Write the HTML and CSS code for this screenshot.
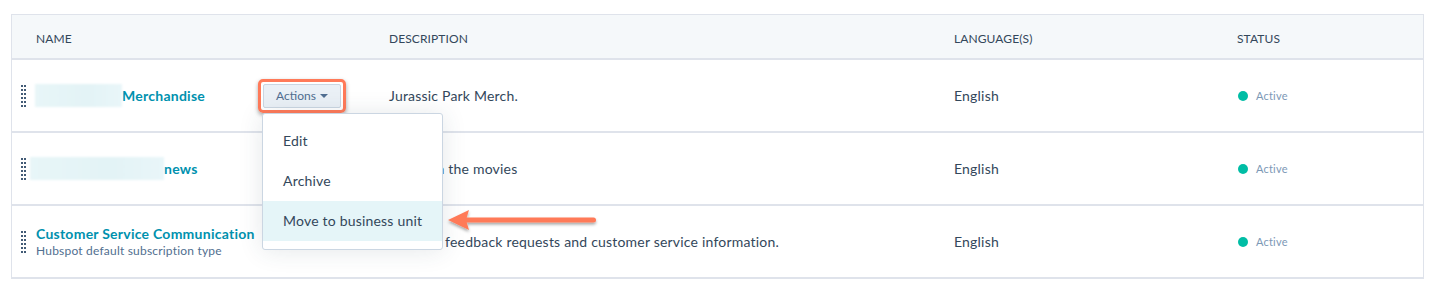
FILE: index.html
```html
<!DOCTYPE html>
<html lang="en">
<head>
    <meta charset="UTF-8">
    <title>Subscription types</title>
    <link rel="stylesheet" href="styles.css">
</head>
<body>
    <div class="table">
        <!-- Header -->
        <div class="row head">
            <div class="cell name-col">Name</div>
            <div class="cell">Description</div>
            <div class="cell">Language(s)</div>
            <div class="cell">Status</div>
        </div>

        <!-- Row 1 -->
        <div class="row">
            <div class="cell name-col">
                <span class="handle"></span>
                <span class="blur blur-1"></span>
                <a class="name" href="#">Merchandise</a>
                <div class="actions-wrap">
                    <div class="highlight">
                        <button class="actions">Actions <span class="caret"></span></button>
                    </div>
                    <ul class="menu">
                        <li>Edit</li>
                        <li>Archive</li>
                        <li class="active">Move to business unit</li>
                    </ul>
                    <svg class="pointer" width="160" height="34" viewBox="0 0 160 34">
                        <defs>
                            <filter id="drop" x="-10%" y="-40%" width="120%" height="180%">
                                <feDropShadow dx="0" dy="2" stdDeviation="1.5" flood-color="#000" flood-opacity="0.35"/>
                            </filter>
                        </defs>
                        <g filter="url(#drop)" fill="#ff7a59">
                            <path d="M4 16 L25 6 L22 16 L25 26 Z"/>
                            <rect x="20" y="13.5" width="132" height="5" rx="2.5"/>
                        </g>
                    </svg>
                </div>
            </div>
            <div class="cell">Jurassic Park Merch.</div>
            <div class="cell">English</div>
            <div class="cell"><span class="dot"></span><span class="status">Active</span></div>
        </div>

        <!-- Row 2 -->
        <div class="row">
            <div class="cell name-col">
                <span class="handle"></span>
                <span class="blur blur-2"></span>
                <a class="name" href="#">news</a>
            </div>
            <div class="cell">News on the movies</div>
            <div class="cell">English</div>
            <div class="cell"><span class="dot"></span><span class="status">Active</span></div>
        </div>

        <!-- Row 3 -->
        <div class="row">
            <div class="cell name-col">
                <span class="handle"></span>
                <div class="name-stack">
                    <a class="name" href="#">Customer Service Communication</a>
                    <span class="sub">Hubspot default subscription type</span>
                </div>
            </div>
            <div class="cell">Includes feedback requests and customer service information.</div>
            <div class="cell">English</div>
            <div class="cell"><span class="dot"></span><span class="status">Active</span></div>
        </div>
    </div>
</body>
</html>
```

FILE: styles.css
```css
* {
    margin: 0;
    padding: 0;
    box-sizing: border-box;
}

body {
    font-family: Lato, 'Noto Sans', sans-serif;
    color: #33475b;
    background: #fff;
    padding: 14px 5px 0 11px;
}

.table {
    border: 1px solid #dfe3eb;
    border-bottom: none;
    width: 1413px;
}

.row {
    display: grid;
    grid-template-columns: 353px 565px 283px 1fr;
    height: 73px;
    border-bottom: 2px solid #dfe3eb;
}

.row.head {
    height: 45px;
    background: #f5f8fa;
    padding-top: 4px;
}

.head .cell {
    font-size: 12px;
    text-transform: uppercase;
    letter-spacing: 0.1px;
}

.cell {
    display: flex;
    align-items: center;
    padding: 0 24px;
    font-size: 14px;
    letter-spacing: 0.2px;
    white-space: nowrap;
}

.row:not(.head) .name-col {
    padding-left: 9px;
}

.handle {
    width: 5px;
    height: 22px;
    margin-right: 10px;
    flex-shrink: 0;
    border-left: 2px dotted #425b76;
    border-right: 2px dotted #425b76;
}

.blur {
    height: 23px;
    background: linear-gradient(90deg, #e8f6f8, #e3f3f6 60%, #e9f6f9);
    filter: blur(1px);
}

.blur-1 {
    width: 87px;
    margin-left: -1px;
}

.blur-2 {
    width: 134px;
    margin-left: -6px;
}

.name {
    color: #0091ae;
    font-weight: 700;
    text-decoration: none;
    font-size: 14px;
    letter-spacing: 0.25px;
}

.name-stack {
    display: flex;
    flex-direction: column;
    gap: 1px;
}

.sub {
    font-size: 12px;
    color: #516f90;
    letter-spacing: 0.2px;
}

.actions-wrap {
    position: relative;
    margin-left: auto;
}

.highlight {
    border: 3px solid #ff7a59;
    border-radius: 5px;
    padding: 2px;
    margin-right: -5px;
    box-shadow: 0 2px 4px rgba(0, 0, 0, 0.35);
}

.actions {
    display: flex;
    align-items: center;
    gap: 4px;
    width: 78px;
    height: 24px;
    justify-content: center;
    background: #eaf0f6;
    border: 1px solid #cbd6e2;
    border-radius: 2px;
    font-family: inherit;
    font-size: 12px;
    color: #506e91;
}

.caret {
    width: 0;
    height: 0;
    border-left: 4px solid transparent;
    border-right: 4px solid transparent;
    border-top: 4px solid #506e91;
}

.menu {
    position: absolute;
    top: 34px;
    left: 4px;
    width: 181px;
    list-style: none;
    background: #fff;
    border: 1px solid #cbd6e2;
    border-radius: 3px;
    padding: 7px 0 8px;
    box-shadow: 0 1px 24px rgba(45, 62, 80, 0.12);
    z-index: 10;
}

.menu li {
    height: 40px;
    display: flex;
    align-items: center;
    padding-left: 20px;
    font-size: 14px;
    letter-spacing: 0.2px;
    color: #33475b;
}

.menu li.active {
    background: #e5f5f8;
}

.pointer {
    position: absolute;
    top: 125px;
    left: 186px;
    z-index: 11;
}

.dot {
    width: 10px;
    height: 10px;
    border-radius: 50%;
    background: #00bda5;
    margin-right: 8px;
    margin-left: 1px;
}

.status {
    font-size: 11px;
    color: #7c98b6;
    letter-spacing: 0.2px;
}
```
